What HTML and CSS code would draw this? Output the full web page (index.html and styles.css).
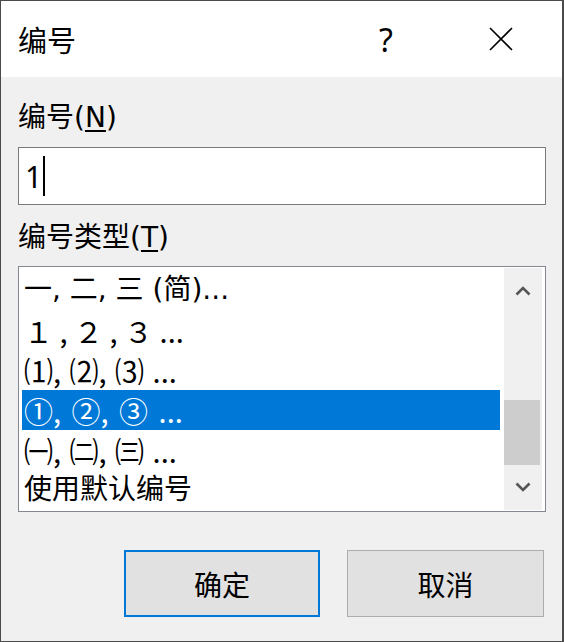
FILE: index.html
```html
<!DOCTYPE html>
<html lang="zh-CN">
<head>
    <meta charset="UTF-8">
    <title>编号</title>
    <link rel="stylesheet" href="styles.css">
</head>
<body>
    <div class="dialog">
        <div class="titlebar">
            <span class="title">编号</span>
            <span class="help">?</span>
            <span class="close">
                <svg width="24" height="24" viewBox="0 0 24 24">
                    <path d="M1 1 L23 23 M23 1 L1 23" stroke="#000" stroke-width="1.6" fill="none"/>
                </svg>
            </span>
        </div>

        <div class="content">
            <label class="field-label" for="num">编号(<u>N</u>)</label>
            <div class="textbox" id="num">
                <span class="value">1</span><span class="caret"></span>
            </div>

            <label class="field-label">编号类型(<u>T</u>)</label>
            <div class="listbox">
                <ul class="items">
                    <li>一, 二, 三 (简)...</li>
                    <li class="cjk">１ , ２ , ３ ...</li>
                    <li class="cjk spaced">⑴, ⑵, ⑶ ...</li>
                    <li class="cjk wide selected">①, ②, ③ ...</li>
                    <li class="cjk spaced">㈠, ㈡, ㈢ ...</li>
                    <li>使用默认编号</li>
                </ul>
                <div class="scrollbar">
                    <div class="arrow">
                        <svg width="16" height="10" viewBox="0 0 16 10">
                            <path d="M1.5 8.5 L8 2 L14.5 8.5" stroke="#555" stroke-width="2.6" fill="none"/>
                        </svg>
                    </div>
                    <div class="track"><div class="thumb"></div></div>
                    <div class="arrow">
                        <svg width="16" height="10" viewBox="0 0 16 10">
                            <path d="M1.5 1.5 L8 8 L14.5 1.5" stroke="#555" stroke-width="2.6" fill="none"/>
                        </svg>
                    </div>
                </div>
            </div>

            <div class="buttons">
                <button class="btn btn-default">确定</button>
                <button class="btn">取消</button>
            </div>
        </div>
    </div>
</body>
</html>
```

FILE: styles.css
```css
* {
    box-sizing: border-box;
}
body {
    margin: 0;
    background: #4a4a4a;
    font-family: "DejaVu Sans", "Noto Sans CJK SC", sans-serif;
    font-size: 28px;
    color: #000;
}
.dialog {
    width: 563px;
    height: 642px;
    border: 1px solid #4a4a4a;
    background: #f0f0f0;
}
.titlebar {
    height: 76px;
    background: #fff;
    display: flex;
    align-items: center;
    padding: 0 15px 0 17px;
}
.title {
    flex: 1;
    font-size: 29px;
}
.help {
    width: 46px;
    text-align: center;
    font-family: "Noto Sans", sans-serif;
    font-size: 32px;
}
.close {
    width: 92px;
    margin-left: 46px;
    display: flex;
    justify-content: center;
}
.content {
    padding: 0 16px 0 17px;
}
.field-label {
    display: block;
    line-height: 36px;
    margin-top: 23px;
}
.field-label u {
    text-underline-offset: 3px;
}
.textbox {
    margin-top: 11px;
    height: 58px;
    border: 1px solid #7a7a7a;
    background: #fff;
    display: flex;
    align-items: center;
    padding-left: 6px;
    font-family: "Noto Sans", sans-serif;
    font-size: 30px;
}
.caret {
    display: inline-block;
    width: 2px;
    height: 40px;
    background: #000;
    margin-left: 1px;
}
.textbox + .field-label {
    margin-top: 15px;
}
.listbox {
    margin-top: 10px;
    height: 246px;
    border: 1px solid #828790;
    background: #fff;
    display: flex;
}
.items {
    flex: 1;
    list-style: none;
    margin: 0;
    padding: 3px 4px 0 3px;
}
.items li {
    height: 40px;
    line-height: 40px;
    padding-left: 2px;
    white-space: nowrap;
}
.items li.cjk {
    font-family: "Noto Sans CJK SC", sans-serif;
    font-size: 29px;
}
.items li.spaced {
    word-spacing: 2px;
}
.items li.wide {
    word-spacing: 4px;
}
.items li.selected {
    background: #0078d7;
    color: #fff;
}
.scrollbar {
    width: 38px;
    margin: 1px 3px 1px 0;
    background: #f0f0f0;
    display: flex;
    flex-direction: column;
}
.arrow {
    height: 48px;
    display: flex;
    align-items: center;
    justify-content: center;
}
.track {
    flex: 1;
}
.thumb {
    width: 36px;
    height: 65px;
    margin-top: 86px;
    background: #cdcdcd;
}
.buttons {
    margin-top: 38px;
    display: flex;
    justify-content: flex-end;
    gap: 27px;
    padding-right: 2px;
}
.btn {
    width: 197px;
    height: 67px;
    background: #e1e1e1;
    border: 1px solid #adadad;
    font-family: inherit;
    font-size: 28px;
    color: #000;
    padding: 0;
}
.btn-default {
    width: 196px;
    border: 2px solid #0078d7;
}
```
